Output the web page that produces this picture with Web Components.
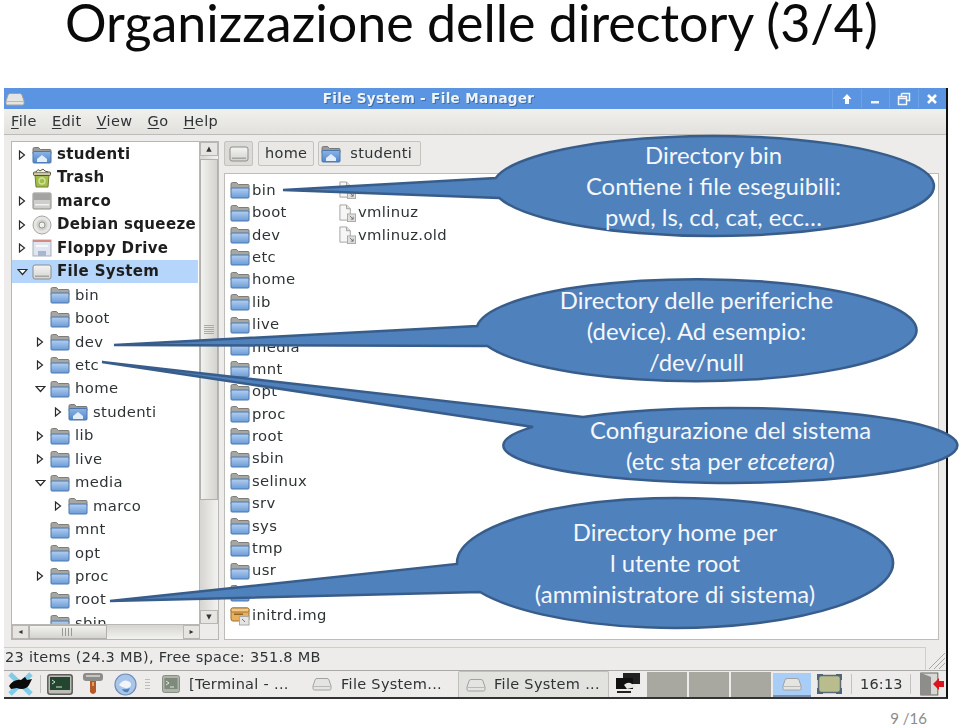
<!DOCTYPE html>
<html lang="it">
<head>
<meta charset="utf-8">
<title>Organizzazione delle directory</title>
<style>
  html, body { margin: 0; background: #fff; }
  body { width: 960px; height: 728px; overflow: hidden; font-family: "Lato", "Liberation Sans", sans-serif; }
</style>
</head>
<body>
<slide-page>
  <span slot="title">Organizzazione delle directory (3/4)</span>

  <fm-window>
    <fm-row slot="tree" arrow="right" icon="home" strong>studenti</fm-row>
    <fm-row slot="tree" icon="trash" strong>Trash</fm-row>
    <fm-row slot="tree" arrow="right" icon="drive" strong>marco</fm-row>
    <fm-row slot="tree" arrow="right" icon="cd" strong>Debian squeeze</fm-row>
    <fm-row slot="tree" arrow="right" icon="floppy" strong>Floppy Drive</fm-row>
    <fm-row slot="tree" arrow="down" icon="disk" strong selected>File System</fm-row>
    <fm-row slot="tree" depth="1" icon="folder">bin</fm-row>
    <fm-row slot="tree" depth="1" icon="folder">boot</fm-row>
    <fm-row slot="tree" depth="1" arrow="right" icon="folder">dev</fm-row>
    <fm-row slot="tree" depth="1" arrow="right" icon="folder">etc</fm-row>
    <fm-row slot="tree" depth="1" arrow="down" icon="folder">home</fm-row>
    <fm-row slot="tree" depth="2" arrow="right" icon="home">studenti</fm-row>
    <fm-row slot="tree" depth="1" arrow="right" icon="folder">lib</fm-row>
    <fm-row slot="tree" depth="1" arrow="right" icon="folder">live</fm-row>
    <fm-row slot="tree" depth="1" arrow="down" icon="folder">media</fm-row>
    <fm-row slot="tree" depth="2" arrow="right" icon="folder">marco</fm-row>
    <fm-row slot="tree" depth="1" icon="folder">mnt</fm-row>
    <fm-row slot="tree" depth="1" icon="folder">opt</fm-row>
    <fm-row slot="tree" depth="1" arrow="right" icon="folder">proc</fm-row>
    <fm-row slot="tree" depth="1" icon="folder">root</fm-row>
    <fm-row slot="tree" depth="1" icon="folder">sbin</fm-row>

    <fm-file slot="files" icon="folder">bin</fm-file>
    <fm-file slot="files" icon="folder">boot</fm-file>
    <fm-file slot="files" icon="folder">dev</fm-file>
    <fm-file slot="files" icon="folder">etc</fm-file>
    <fm-file slot="files" icon="folder">home</fm-file>
    <fm-file slot="files" icon="folder">lib</fm-file>
    <fm-file slot="files" icon="folder">live</fm-file>
    <fm-file slot="files" icon="folder">media</fm-file>
    <fm-file slot="files" icon="folder">mnt</fm-file>
    <fm-file slot="files" icon="folder">opt</fm-file>
    <fm-file slot="files" icon="folder">proc</fm-file>
    <fm-file slot="files" icon="folder">root</fm-file>
    <fm-file slot="files" icon="folder">sbin</fm-file>
    <fm-file slot="files" icon="folder">selinux</fm-file>
    <fm-file slot="files" icon="folder">srv</fm-file>
    <fm-file slot="files" icon="folder">sys</fm-file>
    <fm-file slot="files" icon="folder">tmp</fm-file>
    <fm-file slot="files" icon="folder">usr</fm-file>
    <fm-file slot="files" icon="folder">var</fm-file>
    <fm-file slot="files" icon="package">initrd.img</fm-file>
    <fm-file slot="files" icon="link"></fm-file>
    <fm-file slot="files" icon="link">vmlinuz</fm-file>
    <fm-file slot="files" icon="link">vmlinuz.old</fm-file>
  </fm-window>

  <slide-callout slot="callouts" cx="713.5" cy="186" rx="220.5" ry="50" tip="283,190" from="495.8,178" to="499.4,198" top="140.300" width="320" pitch="30.7">
    Directory bin<br>Contiene i file eseguibili:<br>pwd, ls, cd, cat, ecc…
  </slide-callout>
  <slide-callout slot="callouts" cx="696.500" cy="330.5" rx="220" ry="51" tip="114,345" from="477.2,326" to="487.4,346" top="285.300" width="340" pitch="30.7">
    Directory delle periferiche<br>(device). Ad esempio:<br>/dev/null
  </slide-callout>
  <slide-callout slot="callouts" cx="730.5" cy="445.5" rx="227" ry="37.5" tip="102,362" from="583,416.9" to="533,426.9" top="415.300" width="340" pitch="30.7">
    Configurazione del sistema<br>(etc sta per <em>etcetera</em>)
  </slide-callout>
  <slide-callout slot="callouts" cx="675" cy="563" rx="218" ry="65" tip="110,601" from="457,564" to="480,592" top="517.300" width="340" pitch="30.7">
    Directory home per<br>l utente root<br>(amministratore di sistema)
  </slide-callout>

  <span slot="page">9 /16</span>
</slide-page>

<script>
  // Icone disegnate a mano, stesse dimensioni del riferimento
  const ICONS = {
    folder: `<svg width="20" height="18" viewBox="0 0 20 18">
      <defs><linearGradient id="f" x1="0" y1="0" x2="0" y2="1"><stop offset="0" stop-color="#b4cfef"/><stop offset="1" stop-color="#6a9bd8"/></linearGradient></defs>
      <path d="M1 3q0-1.500 1.500-1.500h4l2 2h9.500q1 0 1 1v4h-18z" fill="#a6a6a3" stroke="#7d7d7a" stroke-width="1"/>
      <rect x="1" y="7" width="18" height="10" rx="1" fill="url(#f)" stroke="#4a76ab"/>
    </svg>`,
    home: `<svg width="20" height="18" viewBox="0 0 20 18">
      <defs><linearGradient id="h" x1="0" y1="0" x2="0" y2="1"><stop offset="0" stop-color="#8db4e4"/><stop offset="1" stop-color="#4f86cb"/></linearGradient></defs>
      <path d="M1 3q0-1.500 1.500-1.500h4l2 2h9.500q1 0 1 1v3h-18z" fill="#9b9b98" stroke="#777"/>
      <rect x="1" y="5.500" width="18" height="11.500" rx="1" fill="url(#h)" stroke="#4a76ab"/>
      <path d="M5 13l5-4 5 4v3h-10z" fill="#e4eefa"/>
    </svg>`,
    trash: `<svg width="20" height="20" viewBox="0 0 20 20">
      <path d="M3 7h14l-1 12h-12z" fill="#a3bd4c" stroke="#6d7f33"/>
      <circle cx="10" cy="13" r="3" fill="none" stroke="#d5e29d" stroke-width="1.300"/>
      <rect x="1.500" y="4" width="17" height="3.500" rx="1" fill="#c9c7a8" stroke="#55553f"/>
      <path d="M4 4l2-2.500 2 1.500 3-2 2 2 3 1" fill="#f2f2ea" stroke="#55553f"/>
    </svg>`,
    drive: `<svg width="20" height="18" viewBox="0 0 20 18">
      <rect x="1" y="1" width="18" height="16" rx="1" fill="#cdcdca" stroke="#8a8a87"/>
      <rect x="2" y="2" width="16" height="6" fill="#a3a3a0"/>
      <rect x="3" y="12" width="14" height="1.500" fill="#f2f2f0"/>
    </svg>`,
    cd: `<svg width="20" height="20" viewBox="0 0 20 20">
      <circle cx="10" cy="10" r="9" fill="#e6e6e4" stroke="#a5a5a2"/>
      <circle cx="10" cy="10" r="5.500" fill="#d0d0cd"/>
      <circle cx="10" cy="10" r="3" fill="#f1f1ef" stroke="#95958f"/>
    </svg>`,
    floppy: `<svg width="20" height="18" viewBox="0 0 20 18">
      <rect x="1" y="1" width="18" height="16" fill="#dfe6f2" stroke="#a8aeb8"/>
      <rect x="1" y="1" width="18" height="2" fill="#d98a80"/>
      <rect x="4" y="6" width="12" height="2" fill="#f7f7f7"/>
      <rect x="6" y="12" width="8" height="5" fill="#a9b7cc"/>
    </svg>`,
    disk: `<svg width="20" height="18" viewBox="0 0 20 18">
      <defs><linearGradient id="d" x1="0" y1="0" x2="0" y2="1"><stop offset="0" stop-color="#f4f4f2"/><stop offset="1" stop-color="#d3d3d0"/></linearGradient></defs>
      <rect x="1" y="2" width="18" height="14" rx="2" fill="url(#d)" stroke="#8d8d8a"/>
      <rect x="3" y="12.500" width="14" height="1.500" fill="#a5a5a2"/>
    </svg>`,
    flatdisk: `<svg width="20" height="16" viewBox="0 0 20 16">
      <path d="M5 2.500h10q1.500 0 2 1.500l2 6v2.500q0 1.500-1.500 1.500h-15q-1.500 0-1.500-1.500v-2.500l2-6q.5-1.500 2-1.500z" fill="#e4e4e2" stroke="#a2a2a0"/>
      <path d="M1.500 10.500h17" stroke="#b9b9b6"/>
    </svg>`,
    link: `<svg width="18" height="20" viewBox="0 0 19 20">
      <path d="M2 1.500h7l4 4v12h-11z" fill="#f6f6f4" stroke="#a2a2a0"/>
      <path d="M9 1.500v4h4" fill="#dcdcda" stroke="#a2a2a0"/>
      <rect x="10" y="11" width="8.500" height="8" fill="#dededc" stroke="#a9a9a7"/>
      <path d="M12.500 13l3.500 3.500m0-2.500v2.500h-2.500" fill="none" stroke="#77777a"/>
    </svg>`,
    package: `<svg width="20" height="20" viewBox="0 0 20 20">
      <rect x="1" y="2" width="18" height="13" rx="2" fill="#e8b05c" stroke="#a1702c"/>
      <rect x="1" y="2" width="18" height="4" rx="1.500" fill="#f0c987" stroke="#a1702c"/>
      <rect x="4" y="7.500" width="9" height="1.500" fill="#8f6222"/>
      <rect x="9.500" y="10.500" width="9.500" height="8.500" fill="#e4e4e2" stroke="#a9a9a7"/>
      <path d="M12 13l3 3" stroke="#77777a"/>
    </svg>`
  };

  class SlidePage extends HTMLElement {
    constructor() {
      super();
      this.attachShadow({ mode: "open" });
    }
    connectedCallback() {
      this.shadowRoot.innerHTML = `
        <style>
          :host { display: block; position: relative; width: 960px; height: 728px; }
          h1 { margin: 0; padding: 0 0 0 65px; height: 88px; box-sizing: border-box; font: 400 52px/44px "Lato", "Liberation Sans", sans-serif; color: #0a0a0a; white-space: nowrap; }
          .foot { display: flex; justify-content: flex-end; padding: 11px 33px 0 0; font-size: 15px; line-height: 17px; color: #8b8b8b; }
        </style>
        <h1><slot name="title"></slot></h1>
        <slot></slot>
        <div class="foot"><slot name="page"></slot></div>
        <slot name="callouts"></slot>
      `;
    }
  }

  class FmWindow extends HTMLElement {
    constructor() {
      super();
      this.attachShadow({ mode: "open" });
    }
    connectedCallback() {
      this.shadowRoot.innerHTML = `
        <style>
          :host { display: block; width: 944px; height: 611px; margin-left: 4px; box-sizing: border-box; border-right: 2px solid #111; border-bottom: 2px solid #333; background: #edecea; color: #2e3436; font: 14px/1 "DejaVu Sans", sans-serif; filter: blur(.35px); }
          .win { display: flex; flex-direction: column; height: 100%; overflow: hidden; }
          .title { flex: 0 0 21px; display: flex; align-items: center; background: #5b94e0; color: #eef3f8; }
          .title .ic { margin: 0 0 0 1px; display: flex; }
          .title b { flex: 1; text-align: center; font-size: 13.500px; letter-spacing: .35px; text-shadow: 1px 1px 0 #3f6ba8; }
          .btns { display: flex; }
          .btns span { width: 27.500px; height: 19px; display: flex; align-items: center; justify-content: center; border-left: 1px solid #6da2e6; }
          .menu { flex: 0 0 26px; display: flex; padding-left: 7px; gap: 15px; align-items: center; background: linear-gradient(#f0f0ee, #e2e1dd); border-bottom: 1px solid #bdbcb8; box-sizing: border-box; font-size: 14.500px; letter-spacing: .4px; }
          .menu u { text-decoration-thickness: 1px; text-underline-offset: 2px; }
          .body { flex: 0 0 512px; display: grid; grid-template-columns: 208px 1fr; gap: 5px; padding: 6px 7px 7px 7px; box-sizing: border-box; min-height: 0; }
          .left { display: grid; grid-template-columns: 1fr 18px; grid-template-rows: 1fr 15px; border: 1px solid #b8b7b3; background: #edecea; min-height: 0; }
          .tree { background: #fff; overflow: hidden; min-height: 0; border-right: 1px solid #b8b7b3; padding-top: .8px; box-sizing: border-box; }
          .vbar { background: linear-gradient(90deg, #d5d4d0, #f2f2f0); display: flex; flex-direction: column; min-height: 0; }
          .vbar i { display: flex; flex: 0 0 14px; align-items: center; justify-content: center; background: #e6e5e2; border: 1px solid #b8b7b3; box-sizing: border-box; font-style: normal; font-size: 7px; color: #333; }
          .vbar .thumb { flex: 0 0 341px; margin-top: 3px; background: linear-gradient(90deg, #f1f1ef, #d4d3cf); border: 1px solid #b2b1ad; box-sizing: border-box; display: flex; align-items: center; justify-content: center; }
          .vbar .grip { width: 10px; height: 10px; background: repeating-linear-gradient(#aaa 0 1px, transparent 1px 2px); }
          .vbar .space { flex: 1; }
          .hbar { display: flex; background: linear-gradient(#d5d4d0, #f2f2f0); border-top: 1px solid #b8b7b3; }
          .hbar i { flex: 0 0 17px; display: flex; align-items: center; justify-content: center; font-style: normal; font-size: 8px; background: #e6e5e2; border: 1px solid #b8b7b3; box-sizing: border-box; color: #333; }
          .hbar .thumb { flex: 0 0 78px; background: linear-gradient(#f1f1ef, #d4d3cf); border: 1px solid #b2b1ad; box-sizing: border-box; display: flex; justify-content: center; align-items: center; }
          .hbar .grip { width: 12px; height: 8px; background: repeating-linear-gradient(90deg, #999 0 1px, transparent 1px 3px); }
          .hbar .space { flex: 1; }
          .right { display: flex; flex-direction: column; gap: 7px; min-height: 0; }
          .crumbs { flex: 0 0 25px; display: flex; gap: 4px; }
          .crumbs span { display: flex; align-items: center; gap: 9px; padding: 0 8px 0 2px; border: 1px solid #c3c2be; border-radius: 2px; background: #e9e8e5; box-sizing: border-box; font-size: 14.500px; letter-spacing: .3px; }
          .crumbs .home { padding: 0 6px; }
          .crumbs .root { background: #dcdbd7; padding: 0 3.500px; margin-right: 1px; }
          .files { flex: 1; background: #fff; border: 1px solid #bdbcb8; padding: 5px 0 0 5px; display: grid; grid-auto-flow: column; grid-template-rows: repeat(20, 22.400px); grid-auto-columns: 108px; overflow: hidden; box-sizing: border-box; min-height: 0; }
          .status { flex: 0 0 23px; display: flex; align-items: stretch; font-size: 14.500px; letter-spacing: .3px; }
          .status .msg { flex: 1; display: flex; align-items: center; padding: 0 0 3px 1px; border-top: 1px solid #cfcec9; border-right: 1px solid #cfcec9; }
          .status svg { flex: none; align-self: flex-end; }
          .task { flex: 1; display: flex; align-items: stretch; background: #edecea; border-top: 1px solid #aaa9a5; font-size: 14.500px; letter-spacing: .3px; box-sizing: border-box; min-height: 0; }
          .task > * { display: flex; align-items: center; flex: none; }
          .sep { width: 1px; background: #c2c1bd; margin: 3px 0; }
          .handle { width: 5px; margin: 8px 0; background: repeating-linear-gradient(#bbb 0 1px, transparent 1px 3px); }
          .active { background: #e2e2df; border: 1px solid #c0bfbb; border-bottom: 0; border-radius: 2px 2px 0 0; box-sizing: border-box; }
          .pager { gap: 2px; padding-top: 1px; align-items: stretch !important; }
          .pager span { width: 40px; background: #a8a7a0; }
          .bluebox { background: #a8cdf6; width: 38px; justify-content: center; border-bottom: 2px solid #7d93ad; box-sizing: border-box; margin-top: 2px; }
        </style>
        <div class="win">
          <div class="title">
            <span class="ic">${ICONS.flatdisk}</span>
            <b>File System - File Manager</b>
            <div class="btns">
              <span><svg width="12" height="12" viewBox="0 0 12 12"><path d="M6 1l4.500 5h-2.500v5h-4v-5h-2.500z" fill="#fff"/></svg></span>
              <span><svg width="12" height="12" viewBox="0 0 12 12"><rect x="2" y="8" width="8" height="2.500" fill="#f2f5fa"/></svg></span>
              <span><svg width="14" height="14" viewBox="0 0 14 14"><path d="M4.500 1.500h8v7h-3M1.500 4.500h8v8h-8zM1.500 6.500h8M4.500 1.500v3" fill="none" stroke="#f2f5fa" stroke-width="1.500"/></svg></span>
              <span><svg width="12" height="12" viewBox="0 0 12 12"><path d="M2 2l8 8M10 2l-8 8" stroke="#fff" stroke-width="2.600"/></svg></span>
            </div>
          </div>
          <div class="menu">
            <span><u>F</u>ile</span><span><u>E</u>dit</span><span><u>V</u>iew</span><span><u>G</u>o</span><span><u>H</u>elp</span>
          </div>
          <div class="body">
            <div class="left">
              <div class="tree"><slot name="tree"></slot></div>
              <div class="vbar">
                <i>▲</i><div class="thumb"><span class="grip"></span></div><div class="space"></div><i>▼</i>
              </div>
              <div class="hbar">
                <i>◂</i><div class="thumb"><span class="grip"></span></div><div class="space"></div><i>▸</i>
              </div>
              <div></div>
            </div>
            <div class="right">
              <div class="crumbs">
                <span class="root">${ICONS.disk}</span>
                <span class="home">home</span>
                <span>${ICONS.home}studenti</span>
              </div>
              <div class="files"><slot name="files"></slot></div>
            </div>
          </div>
          <div class="status">
            <span class="msg">23 items (24.3 MB), Free space: 351.8 MB</span>
            <svg width="20" height="21" viewBox="0 0 20 21"><path d="M3 20L19 4M8 20L19 9M13 20l6-6" stroke="#a8a7a3" fill="none"/></svg>
          </div>
          <div class="task">
            <span style="margin-left:1px;width:30px;justify-content:center">
              <svg width="27" height="24" viewBox="0 0 27 24"><path d="M3 2l21 20M24 2l-21 20" stroke="#7fcbe8" stroke-width="5"/><path d="M2 14c3-5 8-7 12-6l4-3 2 3 5-1-3 6c-2 4-8 5-12 3l-6 1z" fill="#0b0b0b"/></svg>
            </span>
            <span class="sep" style="margin:4px 6px 4px 5px"></span>
            <span style="width:28px">
              <svg width="26" height="21" viewBox="0 0 26 21"><rect x=".8" y=".8" width="24.400" height="19.400" rx="2.500" fill="#bdbdb8" stroke="#5c5c58" stroke-width="1.500"/><rect x="3" y="3" width="20" height="13" fill="#24452f"/><path d="M5 6l3 2-3 2m4 3h6" stroke="#cfe3cf" fill="none"/></svg>
            </span>
            <span style="width:20px;margin-left:8px">
              <svg width="20" height="24" viewBox="0 0 20 24"><rect x="0" y="1" width="20" height="8" rx="3" fill="#8c8c88"/><rect x="3" y="3" width="14" height="2" fill="#c5c5c1"/><path d="M7 9h6v11q-3 4-6 0z" fill="#b65a25"/><path d="M9 10h2v4h-2z" fill="#d9a060"/></svg>
            </span>
            <span style="width:24px;margin-left:11px">
              <svg width="23" height="23" viewBox="0 0 23 23"><circle cx="11.500" cy="11.500" r="10.500" fill="#a9c6e8" stroke="#6d8fb8" stroke-width="1.200"/><path d="M5 12q4-6 9-4 5 2 2 6-5 3-11-2z" fill="#f1f5fa"/><path d="M8 16q4 1 8-1l-2 4q-4 1-6-3z" fill="#4f83b9"/></svg>
            </span>
            <span class="handle" style="margin-left:7px;margin-right:12px"></span>
            <span style="width:18px">
              <svg width="18" height="18" viewBox="0 0 18 18"><rect x=".5" y=".5" width="17" height="17" rx="2" fill="#adb3a8" stroke="#8a8f86"/><rect x="2.500" y="3" width="13" height="11" fill="#7f8a7c"/><path d="M4 6l3 2-3 2m4 2h4" stroke="#e4e8e0" fill="none"/></svg>
            </span>
            <span style="margin-left:9px;width:118px;white-space:nowrap">[Terminal - ...</span>
            <span style="width:20px;margin-left:5px">${ICONS.flatdisk}</span>
            <span style="margin-left:9px;width:117px;white-space:nowrap">File System...</span>
            <span class="active" style="width:151px;padding-left:7px;gap:8px;white-space:nowrap">${ICONS.flatdisk}<span>File System ...</span></span>
            <span style="width:26px;margin-left:6px">
              <svg width="26" height="24" viewBox="0 0 26 24"><rect x="8" y="1" width="17" height="11" fill="#222"/><rect x="1" y="6" width="17" height="11" fill="#111"/><path d="M9 13q4-4 8-1 4 0 4 3l-9 2z" fill="#e8e8e2"/><path d="M2 20h14" stroke="#222" stroke-width="2"/></svg>
            </span>
            <span class="pager" style="margin-left:6px"><span></span><span></span><span></span></span>
            <span class="bluebox" style="margin-left:2px">${ICONS.flatdisk}</span>
            <span style="width:25px;margin-left:6px">
              <svg width="25" height="20" viewBox="0 0 25 20"><rect x="1.500" y="1.500" width="22" height="17" rx="3" fill="#b9bd8d" stroke="#5e6a72" stroke-width="1.500"/><path d="M1 6v-5h5M24 6v-5h-5M1 14v5h5M24 14v5h-5" stroke="#4d6678" stroke-width="2" fill="none"/></svg>
            </span>
            <span class="sep" style="margin-left:9px"></span>
            <span style="margin-left:8px;width:42px;font-size:14.500px;letter-spacing:.2px">16:13</span>
            <span class="sep" style="margin-left:8px"></span>
            <span style="width:26px;margin-left:9px">
              <svg width="26" height="24" viewBox="0 0 26 24"><rect x=".8" y="1" width="17" height="22" fill="#d8d8d5" stroke="#666"/><path d="M1 1l10 4v18h-10z" fill="#8d8d8a"/><path d="M24 9h-5v-3l-6 6 6 6v-3h5z" fill="#d8141c"/></svg>
            </span>
          </div>
        </div>
      `;
    }
  }

  // Riga dell'albero a sinistra
  class FmRow extends HTMLElement {
    constructor() {
      super();
      this.attachShadow({ mode: "open" });
    }
    getArrow() {
      const arrow = this.getAttribute("arrow");
      if (arrow === "right") return `<svg width="8" height="10" viewBox="0 0 8 10"><path d="M1.500 1l5 4-5 4z" fill="#fff" stroke="#2a2a2a" stroke-width="1.200"/></svg>`;
      if (arrow === "down") return `<svg width="11" height="8" viewBox="0 0 11 8"><path d="M1 1.500h9l-4.500 5z" fill="#fff" stroke="#2a2a2a" stroke-width="1.200"/></svg>`;
      return "";
    }
    connectedCallback() {
      const depth = Number(this.getAttribute("depth") || 0);
      const strong = this.hasAttribute("strong");
      this.shadowRoot.innerHTML = `
        <style>
          :host { display: block; height: 23.450px; font-size: 14.800px; letter-spacing: .35px; }
          .row { height: 100%; display: grid; grid-template-columns: 18px 21px 1fr; align-items: center; padding-left: ${depth * 18 + 1}px; box-sizing: border-box; }
          .row.selected { background: #b5d5fb; margin-right: 1px; }
          .arrow { display: flex; justify-content: center; }
          .icon { display: flex; justify-content: center; }
          .name { padding-left: 5px; white-space: nowrap; font-weight: ${strong ? 700 : 400}; font-size: ${strong ? 15 : 14.8}px; color: ${strong ? "#1d1d1d" : "#2e3436"}; }
        </style>
        <div class="row ${this.hasAttribute("selected") ? "selected" : ""}">
          <span class="arrow">${this.getArrow()}</span>
          <span class="icon">${ICONS[this.getAttribute("icon")]}</span>
          <span class="name"><slot></slot></span>
        </div>
      `;
    }
  }

  // Elemento della lista file a destra
  class FmFile extends HTMLElement {
    constructor() {
      super();
      this.attachShadow({ mode: "open" });
    }
    connectedCallback() {
      this.shadowRoot.innerHTML = `
        <style>
          :host { display: flex; align-items: center; gap: 2px; font-size: 14.800px; letter-spacing: .35px; color: #2e3436; white-space: nowrap; }
          span { display: flex; }
        </style>
        <span>${ICONS[this.getAttribute("icon")]}</span><slot></slot>
      `;
    }
  }

  // Fumetto sopra lo screenshot: il posto e' il contenuto stesso
  class SlideCallout extends HTMLElement {
    constructor() {
      super();
      this.attachShadow({ mode: "open" });
    }
    connectedCallback() {
      const a = (n) => this.getAttribute(n);
      const cx = Number(a("cx"));
      const width = Number(a("width"));
      const d = `M${a("tip")} L${a("from")} A${a("rx")} ${a("ry")} 0 1 1 ${a("to")} Z`;
      this.shadowRoot.innerHTML = `
        <style>
          :host { display: block; position: absolute; left: 0; top: 0; width: 960px; height: 728px; pointer-events: none; }
          svg { position: absolute; left: 0; top: 0; }
          .text { position: absolute; left: ${cx - width / 2}px; top: ${a("top")}px; width: ${width}px; text-align: center; color: #f4f7fb; font: 400 23.900px/${a("pitch")}px "Lato", "Liberation Sans", sans-serif; }
        </style>
        <svg width="960" height="728" viewBox="0 0 960 728"><path d="${d}" fill="#4f81bd" stroke="#385d8a" stroke-width="2.500" stroke-linejoin="miter"/></svg>
        <div class="text"><slot></slot></div>
      `;
    }
  }

  customElements.define("slide-page", SlidePage);
  customElements.define("fm-window", FmWindow);
  customElements.define("fm-row", FmRow);
  customElements.define("fm-file", FmFile);
  customElements.define("slide-callout", SlideCallout);
</script>
</body>
</html>
